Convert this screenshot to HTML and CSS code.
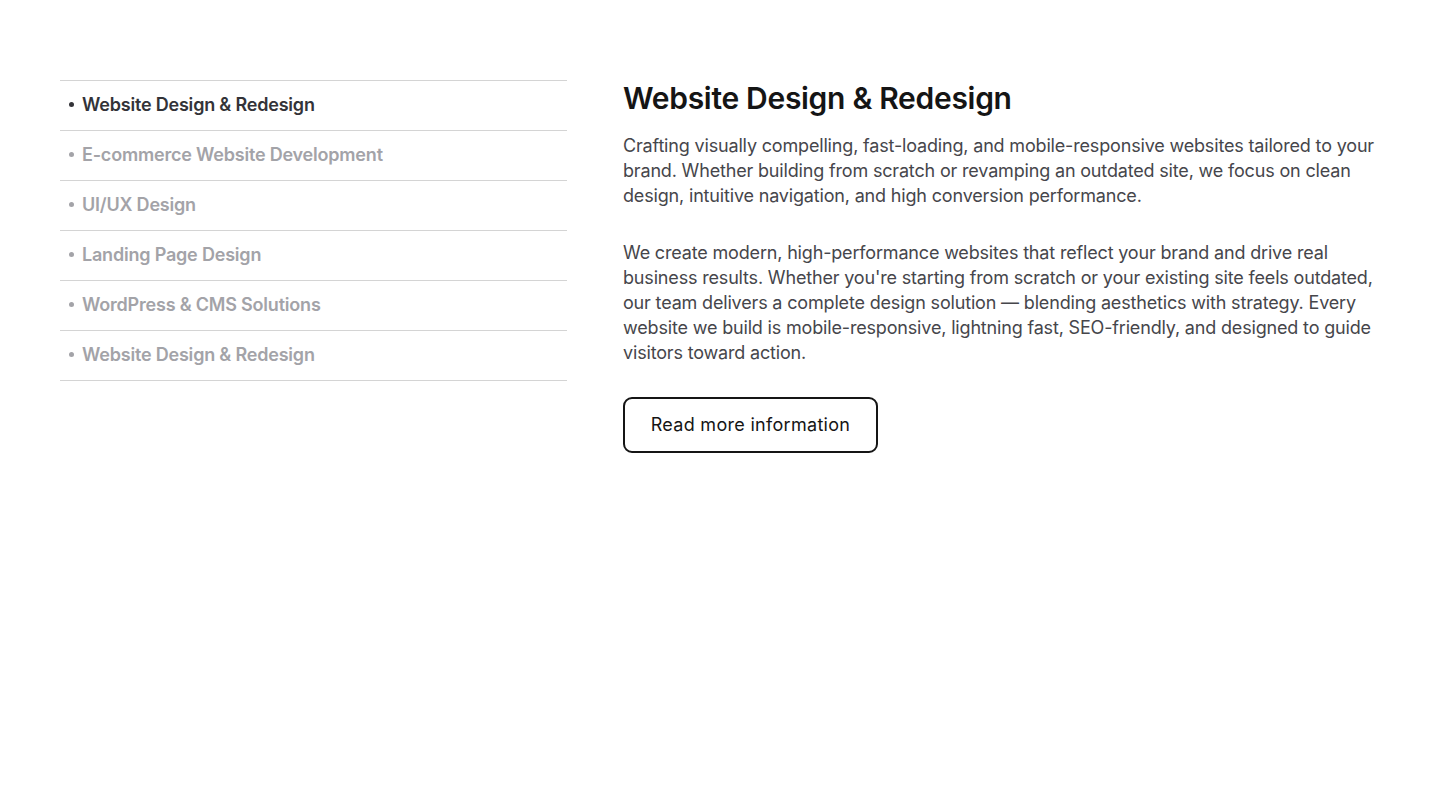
FILE: index.html
```html
<!DOCTYPE html>
<html lang="en">
<head>
<meta charset="utf-8">
<title>Services</title>
<link rel="stylesheet" href="styles.css">
</head>
<body>
<section class="services">
  <ul class="service-list">
    <li class="service-item active"><span class="dot"></span>Website Design &amp; Redesign</li>
    <li class="service-item"><span class="dot"></span>E-commerce Website Development</li>
    <li class="service-item"><span class="dot"></span>UI/UX Design</li>
    <li class="service-item"><span class="dot"></span>Landing Page Design</li>
    <li class="service-item"><span class="dot"></span>WordPress &amp; CMS Solutions</li>
    <li class="service-item"><span class="dot"></span>Website Design &amp; Redesign</li>
  </ul>
  <div class="service-detail">
    <h2 class="detail-title">Website Design &amp; Redesign</h2>
    <p class="detail-text">Crafting visually compelling, fast-loading, and mobile-responsive websites tailored to your brand. Whether building from scratch or revamping an outdated site, we focus on clean design, intuitive navigation, and high conversion performance.</p>
    <p class="detail-text">We create modern, high-performance websites that reflect your brand and drive real business results. Whether you're starting from scratch or your existing site feels outdated, our team delivers a complete design solution — blending aesthetics with strategy. Every website we build is mobile-responsive, lightning fast, SEO-friendly, and designed to guide visitors toward action.</p>
    <a class="detail-button" href="#">Read more information</a>
  </div>
</section>
</body>
</html>
```
FILE: styles.css
```css
* { box-sizing: border-box; }
html, body { margin: 0; padding: 0; background: #fff; }
body {
  font-family: "Inter", "Liberation Sans", sans-serif;
  color: #111;
}
.services {
  display: grid;
  grid-template-columns: 507px 1fr;
  column-gap: 56px;
  padding: 80px 60px 0 60px;
  align-items: start;
}
.service-list {
  list-style: none;
  margin: 0;
  padding: 0;
  border-top: 1px solid #d4d4d4;
}
.service-item {
  display: flex;
  align-items: center;
  gap: 8px;
  height: 50px;
  padding-left: 9px;
  padding-bottom: 2px;
  border-bottom: 1px solid #d4d4d4;
  font-size: 18px;
  font-weight: 600;
  letter-spacing: -0.2px;
  color: #a3a3a8;
}
.service-item.active { color: #333338; }
.dot {
  width: 5px;
  height: 5px;
  border-radius: 50%;
  background: currentColor;
  flex: none;
}
.detail-title {
  margin: 0 0 17px 0;
  font-size: 30px;
  line-height: 36px;
  font-weight: 600;
  letter-spacing: -0.3px;
  color: #151515;
}
.detail-text {
  margin: 0 0 32px 0;
  font-size: 18px;
  line-height: 25px;
  color: #46464b;
  letter-spacing: -0.17px;
}
.detail-button {
  display: inline-flex;
  align-items: center;
  justify-content: center;
  height: 56px;
  width: 255px;
  padding-bottom: 2px;
  border: 2px solid #151515;
  border-radius: 9px;
  font-size: 18px;
  letter-spacing: 0.3px;
  color: #151515;
  text-decoration: none;
}
```
